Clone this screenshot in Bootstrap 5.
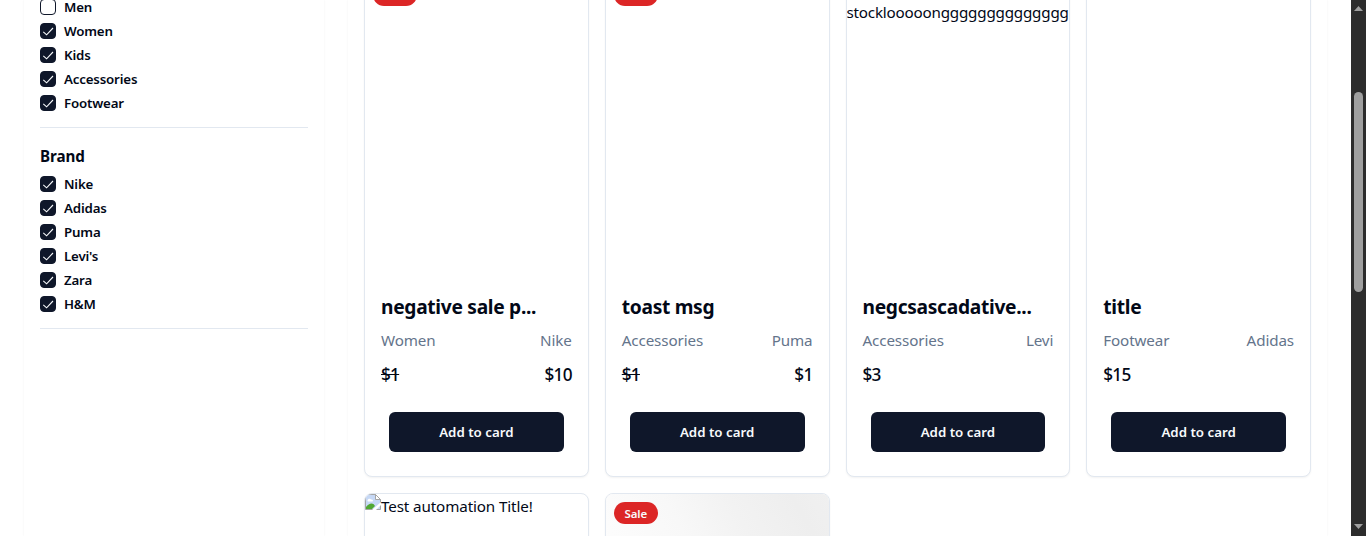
<!DOCTYPE html>
<html lang="en">
<head>
<meta charset="utf-8">
<meta name="viewport" content="width=device-width, initial-scale=1">
<title>Products</title>
<link href="https://cdn.jsdelivr.net/npm/bootstrap@5.3.0/dist/css/bootstrap.min.css" rel="stylesheet">
<style>
:root{--ink:#020817;--navy:#0f172a;--line:#e2e8f0;--muted:#64748b}
body{height:536px;overflow:hidden;font-family:"Noto Sans","Open Sans",sans-serif;font-size:15.2px;line-height:25px;color:var(--ink);background:#fff;letter-spacing:-.12px}
.shop{height:536px;padding:0 24px;gap:24px;overflow:hidden}
.panel{box-shadow:0 0 2px rgba(0,0,0,.06);padding:0 16px}
.filters{width:300px;flex:none}
.first-group{margin-top:-1px}
.option{height:16px;gap:8px;margin-bottom:8px;font-size:13.3px;font-weight:600;line-height:14px;letter-spacing:-.18px}
.tick{width:16px;height:16px;flex:none;border:1px solid var(--navy);border-radius:4px;background:#fff}
.tick.on{background:var(--navy)}
.tick svg{display:block;width:14px;height:14px}
.rule{height:1px;background:var(--line)}
.group-title{font-size:15.2px;font-weight:700;line-height:24px;letter-spacing:-.1px}
.products{display:grid;grid-template-columns:repeat(4,minmax(0,1fr));gap:16px;margin-top:-25px}
.product{border:1px solid var(--line);border-radius:8px;box-shadow:0 1px 2px rgba(0,0,0,.05);overflow:hidden;position:relative;background:#fff;height:502px}
.thumb{height:300px;overflow:hidden;white-space:nowrap}
.thumb svg{display:block;flex:none}
.long{letter-spacing:-.2px}
.photo{background:linear-gradient(60deg,#fdfdfd 0%,#f8f8f8 35%,#f2f2f2 60%,#eee 85%,#f0f0f0 100%) 0 0/100% 60px no-repeat}
.sale{position:absolute;left:8px;top:8px;width:44px;height:22px;border-radius:11px;background:#dc2626;color:#f8fafc;font-size:11.5px;font-weight:600;line-height:23px;text-align:center;letter-spacing:-.1px}
.details{padding:16px 16px 0}
.name{font-size:19.2px;font-weight:700;line-height:30px;letter-spacing:-.3px;margin-bottom:6px}
.meta{color:var(--muted);line-height:24px;margin-bottom:8px}
.price{font-size:17.2px;font-weight:500;line-height:30px;height:28px;letter-spacing:-.75px;color:var(--ink)}
.add{display:block;width:calc(100% - 16px);margin:24px 8px 0;height:40px;border:0;border-radius:6px;background:var(--navy);color:#f8fafc;font-size:13.3px;font-weight:600;line-height:20px;letter-spacing:0;padding:0}
.scroller{width:15px;flex:none;height:536px;background:#2c2c2c;padding:6px 3px 7px}
.scroller i{display:block;width:9px;height:200px;border-radius:5px;background:#9f9f9f;margin-top:81px}
.scroller svg{display:block}
</style>
</head>
<body class="d-flex">
<main class="shop d-flex flex-grow-1">
  <aside class="panel filters">
    <div class="first-group">
      <div class="option d-flex align-items-center"><span class="tick"></span>Men</div>
      <div class="option d-flex align-items-center"><span class="tick on"></span>Women</div>
      <div class="option d-flex align-items-center"><span class="tick on"></span>Kids</div>
      <div class="option d-flex align-items-center"><span class="tick on"></span>Accessories</div>
      <div class="option d-flex align-items-center"><span class="tick on"></span>Footwear</div>
    </div>
    <div class="rule mt-3"></div>
    <h2 class="group-title mb-2 mt-3">Brand</h2>
    <div>
      <div class="option d-flex align-items-center"><span class="tick on"></span>Nike</div>
      <div class="option d-flex align-items-center"><span class="tick on"></span>Adidas</div>
      <div class="option d-flex align-items-center"><span class="tick on"></span>Puma</div>
      <div class="option d-flex align-items-center"><span class="tick on"></span>Levi's</div>
      <div class="option d-flex align-items-center"><span class="tick on"></span>Zara</div>
      <div class="option d-flex align-items-center"><span class="tick on"></span>H&amp;M</div>
    </div>
    <div class="rule mt-3"></div>
  </aside>
  <section class="panel flex-grow-1">
    <div class="products">
      <article class="product">
        <div class="thumb"></div><span class="sale"></span>
        <div class="details">
          <h3 class="name">negative sale p...</h3>
          <div class="meta d-flex justify-content-between"><span>Women</span><span>Nike</span></div>
          <div class="price d-flex justify-content-between"><s>$1</s><span>$10</span></div>
          <button class="btn add">Add to card</button>
        </div>
      </article>
      <article class="product">
        <div class="thumb"></div><span class="sale"></span>
        <div class="details">
          <h3 class="name">toast msg</h3>
          <div class="meta d-flex justify-content-between"><span>Accessories</span><span>Puma</span></div>
          <div class="price d-flex justify-content-between"><s>$1</s><span>$1</span></div>
          <button class="btn add">Add to card</button>
        </div>
      </article>
      <article class="product">
        <div class="thumb pt-4"><span class="long">stocklooooongggggggggggggggggg</span></div>
        <div class="details">
          <h3 class="name">negcsascadative...</h3>
          <div class="meta d-flex justify-content-between"><span>Accessories</span><span>Levi</span></div>
          <div class="price">$3</div>
          <button class="btn add">Add to card</button>
        </div>
      </article>
      <article class="product">
        <div class="thumb"></div>
        <div class="details">
          <h3 class="name">title</h3>
          <div class="meta d-flex justify-content-between"><span>Footwear</span><span>Adidas</span></div>
          <div class="price">$15</div>
          <button class="btn add">Add to card</button>
        </div>
      </article>
      <article class="product">
        <div class="thumb d-flex align-items-start">
          <svg width="16" height="16" viewBox="0 0 16 16"><path d="M.5.5h10l5 5v10H.5z" fill="#c6d8f5" stroke="#a5a5a5"/><path d="M10.500.5v5h5z" fill="#fff" stroke="#a5a5a5"/><path d="M2.500 6.500c0-2 3-2.500 3.500-1 2-.5 2.500 1.500 1.500 2h-4c-.6 0-1-.4-1-1z" fill="#fff"/><path d="M1 15v-2c3-4 7-5 9-1l-3 3z" fill="#51a834"/><path d="M7 16l9-8v3l-5 5z" fill="#fff"/></svg><span class="alt">Test automation Title!</span>
        </div>
      </article>
      <article class="product">
        <div class="photo h-100"></div><span class="sale">Sale</span>
      </article>
    </div>
  </section>
</main>
<div class="scroller d-flex flex-column">
  <svg width="9" height="5" viewBox="0 0 9 5"><path d="M4.500 0L9 5H0z" fill="#9f9f9f"/></svg>
  <i></i>
  <svg class="mt-auto" width="9" height="5" viewBox="0 0 9 5"><path d="M0 0h9L4.500 5z" fill="#9f9f9f"/></svg>
</div>
<script src="https://cdn.jsdelivr.net/npm/bootstrap@5.3.0/dist/js/bootstrap.bundle.min.js"></script>
<script>
document.querySelectorAll('.tick.on').forEach(function (box) {
  box.innerHTML = '<svg viewBox="0 0 14 14" fill="none" stroke="#f8fafc" stroke-width="1.100"><path d="M2.300 7.800L5.600 10.800L12 4"/></svg>';
});
</script>
</body>
</html>
